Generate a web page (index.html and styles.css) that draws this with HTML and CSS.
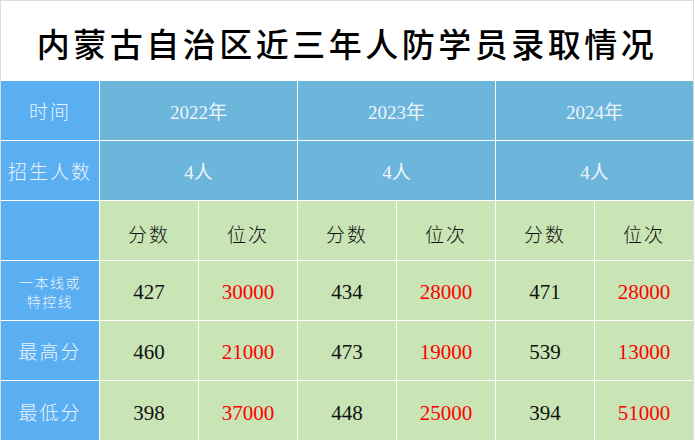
FILE: index.html
```html
<!DOCTYPE html>
<html lang="zh">
<head>
<meta charset="utf-8">
<link rel="stylesheet" href="styles.css">
</head>
<body>
<div class="sheet">
  <div class="title">内蒙古自治区近三年人防学员录取情况</div>
  <div class="grid">
    <div class="cell side">时间</div>
    <div class="cell head span2">2022年</div>
    <div class="cell head span2">2023年</div>
    <div class="cell head span2">2024年</div>

    <div class="cell side">招生人数</div>
    <div class="cell head span2">4人</div>
    <div class="cell head span2">4人</div>
    <div class="cell head span2">4人</div>

    <div class="cell side"></div>
    <div class="cell data label">分数</div>
    <div class="cell data label">位次</div>
    <div class="cell data label">分数</div>
    <div class="cell data label">位次</div>
    <div class="cell data label">分数</div>
    <div class="cell data label">位次</div>

    <div class="cell side small">一本线或<br>特控线</div>
    <div class="cell data num">427</div>
    <div class="cell data num red">30000</div>
    <div class="cell data num">434</div>
    <div class="cell data num red">28000</div>
    <div class="cell data num">471</div>
    <div class="cell data num red">28000</div>

    <div class="cell side">最高分</div>
    <div class="cell data num">460</div>
    <div class="cell data num red">21000</div>
    <div class="cell data num">473</div>
    <div class="cell data num red">19000</div>
    <div class="cell data num">539</div>
    <div class="cell data num red">13000</div>

    <div class="cell side last">最低分</div>
    <div class="cell data num last">398</div>
    <div class="cell data num red last">37000</div>
    <div class="cell data num last">448</div>
    <div class="cell data num red last">25000</div>
    <div class="cell data num last">394</div>
    <div class="cell data num red last">51000</div>
  </div>
</div>
</body>
</html>
```

FILE: styles.css
```css
html, body {
  margin: 0;
  padding: 0;
  background: #ffffff;
}

.sheet {
  width: 692px;
  border-top: 1px solid #dcdcdc;
  border-left: 1px solid #dcdcdc;
  border-right: 1px solid #dcdcdc;
  font-family: "Noto Sans CJK SC", sans-serif;
}

.title {
  height: 80px;
  display: flex;
  align-items: center;
  justify-content: center;
  padding-top: 4px;
  box-sizing: border-box;
  font-size: 33px;
  font-weight: 500;
  letter-spacing: 3.5px;
  color: #000;
  background: #fff;
}

.grid {
  display: grid;
  grid-template-columns: repeat(7, 98px);
  grid-auto-rows: 59px;
  gap: 1px;
  background: #ffffff;
}

.cell {
  display: flex;
  align-items: center;
  justify-content: center;
  text-align: center;
  font-size: 19px;
  font-weight: 300;
  letter-spacing: 2px;
}

.span2 {
  grid-column: span 2;
}

.side {
  background: #59aff2;
  color: #eef3fd;
}

.small {
  font-size: 14px;
  line-height: 19px;
  letter-spacing: 1.5px;
  padding-top: 2px;
  box-sizing: border-box;
}

.head {
  background: #6cb6db;
  color: #eef4fb;
}

.head, .num {
  font-family: "Liberation Serif", "Noto Sans CJK SC", serif;
  font-weight: 400;
  letter-spacing: 0;
}

.head {
  font-size: 19px;
}

.data {
  background: #c9e4b5;
  color: #111;
}

.label {
  padding-top: 6px;
  box-sizing: border-box;
}

.num {
  font-size: 21px;
  padding-top: 4px;
  box-sizing: border-box;
}

.red {
  color: #ff0000;
}

.last {
  height: 61px;
}
```
